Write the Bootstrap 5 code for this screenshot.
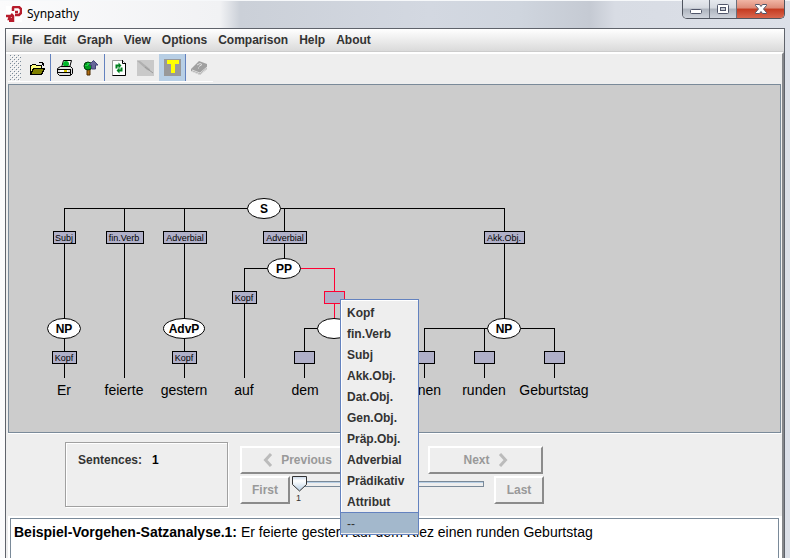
<!DOCTYPE html>
<html lang="en">
<head>
<meta charset="utf-8">
<meta name="viewport" content="width=device-width, initial-scale=1">
<title>Synpathy</title>
<link href="https://cdn.jsdelivr.net/npm/bootstrap@5.3.0/dist/css/bootstrap.min.css" rel="stylesheet">
<style>
  :root { --steel: #7a8a99; --panel: #eee; --ink: #333; --blue: #6382bf; }
  body {
    font-family: "Liberation Sans", Arial, sans-serif; font-size: 12px; line-height: 16px; color: var(--ink);
    background: linear-gradient(90deg, #fbfbfc 0, #f1f2f4 220px, #cbd0d8 240px, #d3d8e1 430px, #cfd5de 520px, #c5cad3 590px, #d8dce4 615px, #dce0e8 100%);
  }
  button { font: inherit; color: inherit; }
  .titlebar { height: 28px; padding-left: 6px; box-shadow: inset 0 1px #f6f8fa; }
  .titlebar h1 { font: 12px/16px "Noto Sans", sans-serif; color: #000; }
  .brand { padding-top: 6px; gap: 5px; }
  .caption-set { height: 19px; margin-right: 5px; border: 1px solid #50555f; border-top: 0; border-radius: 0 0 5px 5px; overflow: hidden; }
  .caption-set button { width: 27px; border: 0; border-right: 1px solid #6a707c; background: linear-gradient(#e6e9ee 0, #d5d9e0 45%, #aeb4be 50%, #cfd4dc 100%); }
  .caption-set .shut { width: 47px; border-right: 0; background: linear-gradient(#f0b5a5 0, #dd8a77 45%, #c43a20 50%, #d9664d 100%); }
  .frame { margin: 0 5px; border: 1px solid #5f636b; border-bottom: 0; background: var(--panel); }
  .menus { height: 23px; background: linear-gradient(#fff, #dadada); border-bottom: 1px solid #ccc; gap: 11px; padding-left: 6px; }
  .menus button { border: 0; padding: 0; background: none; font-weight: 700; }
  .pane { border-top: 2px solid #fff; border-right: 2px solid #85878b; padding-left: 2px; }
  .tools { height: 30px; padding: 0 2px 2px 0; }
  .tools > div { border-bottom: 1px solid #fff; }
  .tools button { width: 27px; height: 27px; border: 0; padding: 0; background: var(--panel); }
  .tools button.split { border-right: 1px solid var(--blue); }
  .tools button.chosen { background: #b8cfe5; }
  .tools svg { shape-rendering: crispEdges; display: block; margin: auto; }
  .tools .grip { margin: 1px 3px 0 2px; }
  .tools .soft { shape-rendering: auto; }
  .tree { border: 1px solid var(--steel); background: #ccc; margin-right: 1px; }
  .tree svg { display: block; max-width: none; }
  .wire { fill: none; stroke: #000; }
  .tag rect { fill: #b0b0c8; stroke: #000; }
  .tag text { font-size: 9px; text-anchor: middle; fill: #000; }
  .hot, .tag .hot rect { stroke: #ff0033; }
  .phrase ellipse { fill: #fff; stroke: #000; }
  .phrase text { font-size: 12px; font-weight: 700; text-anchor: middle; fill: #000; }
  .words text { font-size: 14px; text-anchor: middle; fill: #000; }
  .relations { left: 331px; top: 214px; width: 79px; min-width: 0; padding: 2px 0 1px; border: 1px solid var(--blue); border-radius: 0; background: var(--panel); font-size: 12px; box-shadow: inset 1px 1px #fff; }
  .relations .dropdown-item { height: 21px; padding: 1px 6px 0; font-weight: 700; font-size: 12px; color: var(--ink); line-height: 21px; }
  .relations .dropdown-item.active { background: #a3b8cc; font-weight: 400; border-top: 1px solid var(--blue); }
  .controls { padding: 8px 0 9px 57px; border-top: 1px solid #fff; gap: 12px; }
  .count { width: 163px; height: 65px; border: 1px solid #a0a0a0; box-shadow: inset 1px 1px #fff, 1px 1px #fff; padding: 9px 12px; gap: 10px; font-weight: 700; }
  .count output { color: #000; }
  .mover { height: 28px; border: 2px solid; border-color: #fff #8b8b8b #8b8b8b #fff; background: var(--panel); font-weight: 700; padding: 0; }
  .mover:disabled { color: #999; }
  .wide { width: 115px; }
  .slim { width: 50px; }
  .gapped { gap: 73px; }
  .browse { padding-top: 4px; gap: 2px; }
  .seek { width: 204px; padding: 0 10px; font-size: 9px; line-height: 14px; color: var(--ink); }
  .seek input { appearance: none; -webkit-appearance: none; width: 100%; height: 15px; background: none; margin: 0; display: block; }
  .seek input::-webkit-slider-runnable-track { height: 6px; background: var(--panel); border: 1px solid var(--steel); box-shadow: inset 0 1px #b8cfe5; }
  .seek input::-webkit-slider-thumb { -webkit-appearance: none; width: 15px; height: 16px; margin: -6px 0 0 -9px; border: 0;
    background: url("data:image/svg+xml,%3Csvg xmlns='http://www.w3.org/2000/svg' width='15' height='16'%3E%3ClinearGradient id='g' x2='0' y2='1'%3E%3Cstop stop-color='%23c8d8ea'/%3E%3Cstop offset='.3' stop-color='white'/%3E%3Cstop offset='1' stop-color='%23b8cfe5'/%3E%3C/linearGradient%3E%3Cpath d='M.5.5h14v8l-7 6.500-7-6.500z' fill='url(%23g)' stroke='%23333'/%3E%3C/svg%3E"); }
  .seek output { margin-left: -4px; display: block; }
  .passage { border: 1px solid var(--steel); border-bottom: 0; background: #fff; color: #000; font-size: 14px; padding: 5px 3px; margin-right: 2px; }
  .sheet { background: #fff; padding: 2px 1px 0 2px; }
</style>
<script src="https://cdn.jsdelivr.net/npm/bootstrap@5.3.0/dist/js/bootstrap.bundle.min.js"></script>
</head>
<body class="d-flex flex-column min-vh-100 overflow-hidden">

<header class="titlebar d-flex justify-content-between align-items-start">
  <div class="brand d-flex align-items-center">
    <svg width="16" height="16" viewBox="0 0 16 16" aria-hidden="true"><rect width="16" height="16" fill="#fff"/><path d="M7 5V2q0-1 1-1h5l2 2v4l-2 2H9M9 6h3" fill="none" stroke="#b71c2c" stroke-width="2.500"/><path d="M0 10h4l-1 3h4v-3l-2-2M7 13v2H3" fill="none" stroke="#b71c2c" stroke-width="2.500"/></svg>
    <h1 class="m-0">Synpathy</h1>
  </div>
  <div class="caption-set d-flex">
    <button type="button" class="d-flex p-0 justify-content-center" aria-label="Minimize"><svg width="14" height="17"><rect x="1.500" y="9.500" width="11" height="4" rx="1" fill="#fff" stroke="#50566a"/></svg></button>
    <button type="button" class="d-flex p-0 justify-content-center" aria-label="Maximize"><svg width="14" height="17"><rect x="1.500" y="4.500" width="11" height="9" rx="1" fill="#fff" stroke="#50566a"/><rect x="4.500" y="7.500" width="5" height="3" fill="#c4c9d2" stroke="#50566a"/></svg></button>
    <button type="button" class="shut d-flex p-0 justify-content-center" aria-label="Close"><svg width="14" height="17"><path d="M1.500 4.500h4L7 6.500l1.500-2h4v1L9.500 9l3 3.500v1h-4L7 11.500l-1.500 2h-4v-1L4.500 9l-3-3.500z" fill="#fff" stroke="#50566a"/></svg></button>
  </div>
</header>

<div class="frame d-flex flex-column flex-grow-1">
  <nav class="menus d-flex align-items-center" aria-label="Main menu">
    <button type="button">File</button><button type="button">Edit</button><button type="button">Graph</button><button type="button">View</button><button type="button">Options</button><button type="button">Comparison</button><button type="button">Help</button><button type="button">About</button>
  </nav>

  <main class="pane d-flex flex-column flex-grow-1">
    <div class="tools d-flex" role="toolbar" aria-label="Tools">
      <div class="d-flex">
        <svg class="grip" width="11" height="26" aria-hidden="true"><defs><pattern id="dots" width="4" height="4" patternUnits="userSpaceOnUse"><path d="M0 0h1v1H0zM2 2h1v1H2z" fill="#7a8a99"/><path d="M1 1h1v1H1zM3 3h1v1H3z" fill="#fff"/></pattern></defs><rect width="11" height="26" fill="url(#dots)"/></svg>
        <button type="button" class="split" aria-label="Open"><svg width="16" height="16"><path d="M1.500 13.500v-8h1l1-1h3l1 1h5v3" fill="#ffff80" stroke="#000"/><path d="M1.500 14.500l3-6h11l-3 6z" fill="#808000" stroke="#000"/><path d="M9.500 3.500l1-1h3l1 2m0-2v3m-2-1h2" fill="none" stroke="#000"/></svg></button>
        <button type="button" aria-label="Print"><svg class="soft" width="16" height="16"><path d="M4.500 7.500l2-7h8l-2 7z" fill="#fff" stroke="#000"/><circle cx="9" cy="4" r="3" fill="#00b52a"/><path d="M.5 8.500l3-2h10l2 2v5l-2 2h-11l-2-2z" fill="#ddd" stroke="#000"/><path d="M1 9.500h12M1 12.500h12M13.500 9v6" stroke="#000"/><path d="M3 10h8v2H3z" fill="#fff"/><path d="M7 10h3v2H7z" fill="#d6c400"/></svg></button>
        <button type="button" class="split" aria-label="Export tree"><svg class="soft" width="16" height="16"><path d="M4 9h3v6H4z" fill="#b06a10" stroke="#4a2a00"/><circle cx="5" cy="6" r="4" fill="#009c1f" stroke="#003b0b"/><path d="M2 5h2V3h3v2H5v1H2z" fill="#22cc44"/><path d="M10.500.5l4.500 4.500h-2.500v4h-4V5H6z" fill="#666699" stroke="#444477"/></svg></button>
        <button type="button" aria-label="Refresh"><svg class="soft" width="16" height="16"><path d="M1.500.5h10l3 3v12h-13z" fill="#fff" stroke="#999"/><path d="M14.500 3v12.500h-13M11.500 0v3.500h3" fill="none" stroke="#000"/><path d="M5.500 8.500v-3H8M10.500 7.500v3H8" fill="none" stroke="#008220" stroke-width="2"/><path d="M7.500 2.500l3 3-3 3zM8.500 7.500l-3 3 3 3z" fill="#008220"/></svg></button>
        <button type="button" aria-label="Draw" disabled><svg class="soft" width="17" height="16"><path d="M0 0h17v16H0z" fill="#c9c9c9"/><path d="M0 1h3l10 8v2l-3-1z" fill="#b0b0b0"/><path d="M8 7l8 6" stroke="#999"/></svg></button>
        <button type="button" class="split chosen" aria-label="Text" aria-pressed="true"><svg width="17" height="17"><path d="M0 0h17v17H0z" fill="#999"/><path d="M3 1h12v4h-4v9H7V5H3z" fill="#ff0"/></svg></button>
        <button type="button" aria-label="Help" disabled><svg class="soft" width="17" height="16"><path d="M0 9l8-8 8 3v5l-7 6-9-4z" fill="#a0a0a0"/><path d="M1 10l8 3 7-6M1 11.500l8 3 7-6" fill="none" stroke="#ddd"/><path d="M6 5l3-1.500 2 1-3 2M7 8h1" fill="none" stroke="#ddd"/></svg></button>
      </div>
    </div>

    <section class="tree position-relative" aria-label="Syntax tree">
      <svg width="600" height="347" viewBox="9 85 600 347">
        <g class="wire" shape-rendering="crispEdges">
          <path d="M64.500 378V208.500H504.500V328M124.500 208V378M184.500 208V378M284.500 208V268M244.500 378V268.500H284M304.500 378V328.500H334M424.500 378V328.500H554.500V378M484.500 328V378"/>
          <path class="hot" d="M284 268.500H334.500V328"/>
        </g>
        <g class="tag">
          <rect x="53.500" y="231.500" width="22" height="12"/><text x="64" y="241">Subj</text>
          <rect x="106.500" y="231.500" width="37" height="12"/><text x="124" y="241">fin.Verb</text>
          <rect x="163.500" y="231.500" width="43" height="12"/><text x="185" y="241">Adverbial</text>
          <rect x="263.500" y="231.500" width="43" height="12"/><text x="285" y="241">Adverbial</text>
          <rect x="484.500" y="231.500" width="40" height="12"/><text x="504" y="241">Akk.Obj.</text>
          <rect x="232.500" y="291.500" width="24" height="12"/><text x="244" y="301">Kopf</text>
          <rect x="52.500" y="351.500" width="24" height="12"/><text x="64" y="361">Kopf</text>
          <rect x="172.500" y="351.500" width="24" height="12"/><text x="184" y="361">Kopf</text>
          <g class="hot"><rect x="324.500" y="291.500" width="20" height="12"/></g>
          <rect x="294.500" y="351.500" width="20" height="12"/>
          <rect x="414.500" y="351.500" width="20" height="12"/>
          <rect x="474.500" y="351.500" width="20" height="12"/>
          <rect x="544.500" y="351.500" width="20" height="12"/>
        </g>
        <g class="phrase">
          <ellipse cx="264" cy="208.500" rx="16.500" ry="10"/><text x="264" y="213">S</text>
          <ellipse cx="284" cy="268.500" rx="16.500" ry="10"/><text x="284" y="273">PP</text>
          <ellipse cx="64" cy="328.500" rx="16.500" ry="10"/><text x="64" y="333">NP</text>
          <ellipse cx="184" cy="328.500" rx="20.500" ry="10"/><text x="184" y="333">AdvP</text>
          <ellipse cx="334" cy="328.500" rx="16.500" ry="10"/>
          <ellipse cx="504" cy="328.500" rx="16.500" ry="10"/><text x="504" y="333">NP</text>
        </g>
        <g class="words">
          <text x="64" y="395">Er</text><text x="124" y="395">feierte</text><text x="184" y="395">gestern</text><text x="244" y="395">auf</text><text x="305" y="395">dem</text><text x="424" y="395">einen</text><text x="484" y="395">runden</text><text x="554" y="395">Geburtstag</text>
        </g>
      </svg>
      <div class="relations dropdown-menu show">
        <button type="button" class="dropdown-item">Kopf</button>
        <button type="button" class="dropdown-item">fin.Verb</button>
        <button type="button" class="dropdown-item">Subj</button>
        <button type="button" class="dropdown-item">Akk.Obj.</button>
        <button type="button" class="dropdown-item">Dat.Obj.</button>
        <button type="button" class="dropdown-item">Gen.Obj.</button>
        <button type="button" class="dropdown-item">Präp.Obj.</button>
        <button type="button" class="dropdown-item">Adverbial</button>
        <button type="button" class="dropdown-item">Prädikativ</button>
        <button type="button" class="dropdown-item">Attribut</button>
        <button type="button" class="dropdown-item active">--</button>
      </div>
    </section>

    <section class="controls d-flex" aria-label="Sentence navigation">
      <div class="count d-flex align-items-start"><label for="total">Sentences:</label><output id="total">1</output></div>
      <div class="browse d-flex flex-column">
        <div class="d-flex gapped">
          <button type="button" class="mover wide d-flex align-items-center justify-content-center gap-2" disabled><svg width="10" height="14" aria-hidden="true"><path d="M8 1L2.500 7 8 13" fill="none" stroke="#bbb" stroke-width="3"/></svg>Previous</button>
          <button type="button" class="mover wide d-flex align-items-center justify-content-center gap-2" disabled>Next<svg width="10" height="14" aria-hidden="true"><path d="M2 1l5.500 6L2 13" fill="none" stroke="#bbb" stroke-width="3"/></svg></button>
        </div>
        <div class="d-flex">
          <button type="button" class="mover slim" disabled>First</button>
          <div class="seek"><input type="range" id="pos" min="1" max="2" value="1" aria-label="Sentence"><output for="pos">1</output></div>
          <button type="button" class="mover slim" disabled>Last</button>
        </div>
      </div>
    </section>

    <div class="sheet d-flex flex-grow-1">
      <div class="passage flex-grow-1"><strong>Beispiel-Vorgehen-Satzanalyse.1:</strong> Er feierte gestern auf dem Kiez einen runden Geburtstag</div>
    </div>
  </main>
</div>
</body>
</html>
